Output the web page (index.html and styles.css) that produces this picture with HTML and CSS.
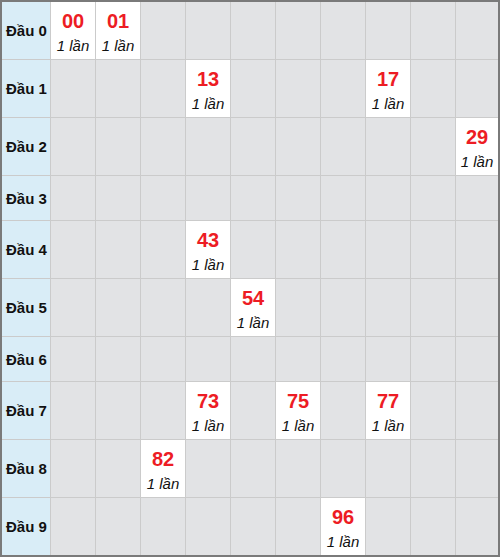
FILE: index.html
```html
<!DOCTYPE html>
<html lang="vi">
<head>
    <meta charset="UTF-8">
    <meta name="viewport" content="width=device-width, initial-scale=1.0">
    <title>Bảng đầu loto</title>
    <link rel="stylesheet" href="styles.css">
</head>
<body>
    <div class="board" id="board">
        <!-- các ô được tạo bằng JavaScript -->
    </div>
    <script>
        document.addEventListener('DOMContentLoaded', function () {
            const board = document.getElementById('board');

            // số đã về theo từng đầu
            const results = {
                0: ['00', '01'],
                1: ['13', '17'],
                2: ['29'],
                4: ['43'],
                5: ['54'],
                7: ['73', '75', '77'],
                8: ['82'],
                9: ['96']
            };

            for (let head = 0; head < 10; head++) {
                const label = document.createElement('div');
                label.className = 'head';
                label.textContent = 'Đầu ' + head;
                board.appendChild(label);

                const nums = results[head] || [];
                for (let tail = 0; tail < 10; tail++) {
                    const cell = document.createElement('div');
                    const num = '' + head + tail;
                    if (nums.includes(num)) {
                        cell.className = 'cell hit';
                        cell.innerHTML = `
                            <div class="num">${num}</div>
                            <div class="count">1 lần</div>
                        `;
                    } else {
                        cell.className = 'cell';
                    }
                    board.appendChild(cell);
                }
            }
        });
    </script>
</body>
</html>
```

FILE: styles.css
```css
body {
    margin: 0;
    padding: 0;
    font-family: "Liberation Sans", Arial, sans-serif;
    background-color: #fff;
}

.board {
    display: grid;
    grid-template-columns: 48px repeat(9, 44px) 42px;
    grid-auto-rows: minmax(44px, auto);
    gap: 1px;
    width: 496px;
    background-color: #cbcbcb;
    border: 2px solid #7a7a7a;
}

.head {
    display: flex;
    align-items: center;
    padding-left: 4px;
    background-color: #d9edf7;
    font-size: 15px;
    font-weight: bold;
    color: #111;
}

.cell {
    background-color: #e2e3e5;
}

.cell.hit {
    background-color: #fff;
    text-align: center;
    padding: 5px 0 2px;
}

.num {
    font-size: 20px;
    line-height: 28px;
    font-weight: bold;
    color: #ed1c24;
}

.count {
    font-size: 15px;
    line-height: 22px;
    font-style: italic;
    color: #111;
}
```
